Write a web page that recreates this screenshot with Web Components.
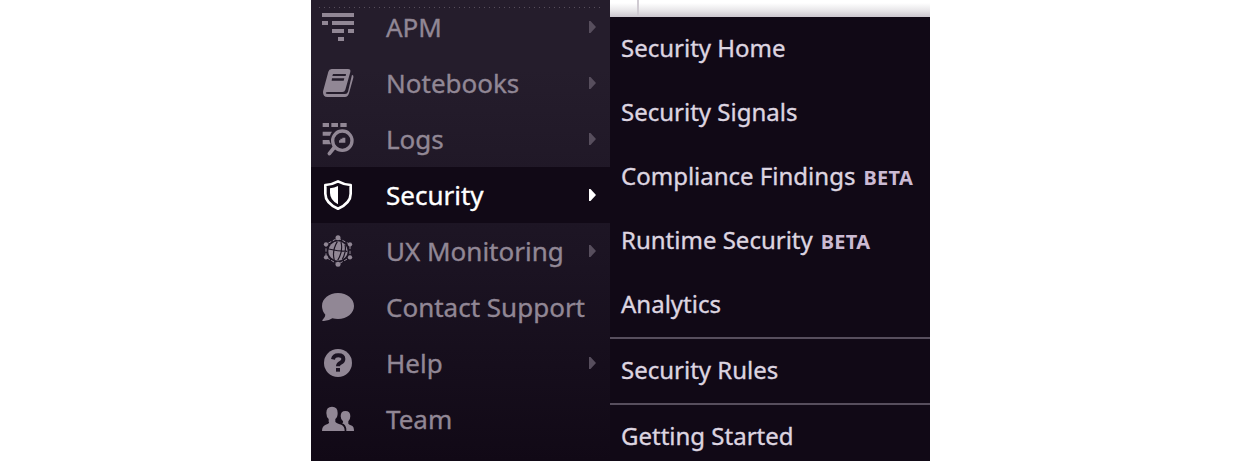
<!DOCTYPE html>
<html lang="en">
<head>
<meta charset="utf-8">
<title>Security navigation</title>
<style>
html,body{margin:0;height:461px;overflow:hidden;background:#fff;font-family:"Noto Sans",sans-serif}
</style>
</head>
<body>
<app-shell>
  <side-nav slot="nav">
    <nav-row icon="apm" arrow>APM</nav-row>
    <nav-row icon="notebook" arrow>Notebooks</nav-row>
    <nav-row icon="logs" arrow>Logs</nav-row>
    <nav-row icon="shield" arrow active>Security</nav-row>
    <nav-row icon="globe" arrow>UX Monitoring</nav-row>
    <nav-row icon="chat">Contact Support</nav-row>
    <nav-row icon="help" arrow>Help</nav-row>
    <nav-row icon="team">Team</nav-row>
  </side-nav>
  <sub-menu slot="menu">
    <menu-link>Security Home</menu-link>
    <menu-link>Security Signals</menu-link>
    <menu-link badge="BETA">Compliance Findings</menu-link>
    <menu-link badge="BETA">Runtime Security</menu-link>
    <menu-link>Analytics</menu-link>
    <menu-link divided>Security Rules</menu-link>
    <menu-link divided>Getting Started</menu-link>
  </sub-menu>
</app-shell>
<script>
const ICONS = {
  apm: '<path d="M33 39h96v12H33zM33 63h18v12H33zM63 63h66v12H63zM63 87h36v12H63zM111 87h18v12h-18zM81 111h18v12H81z"/>',
  notebook: '<path fill-rule="evenodd" d="M62 39h49q9 0 7 9l-15 53q-2 7-9 7H51q-7 0-7 3t7 3h51q7 0 9-7l12-51q6 2 4 9l-13 47q-3 11-12 11H49q-13 0-13-14 0-5 2-10l14-52q2-8 10-8zM66 54l-2 6h40l1-6zM63 67l-1 7h36l2-7z"/>',
  logs: '<path d="M35 33h19v12H35zM61 33h20v12H61zM88 33h19v12H88zM35 59h28q-4 5-6 12H35zM35 84h20q1 7 5 13H35z"/><circle cx="94" cy="86" r="29" fill="none" stroke="currentColor" stroke-width="10"/><path d="M71 105L55 125" stroke="currentColor" stroke-width="11" stroke-linecap="round"/><path d="M84 92V85h4v-5h6v-3h9v15H84z"/>',
  shield: '<path d="M81 40q18 10 38 11v26q0 28-38 45Q43 105 43 77V51q20-1 38-11z" fill="none" stroke="currentColor" stroke-width="8" stroke-linejoin="round"/><path d="M81 54v55q-24-13-24-34V61q13-1 24-7z"/>',
  globe: '<path d="M81 42l36 19v39l-36 21-36-21V61z" fill="none" stroke="currentColor" stroke-width="3" stroke-dasharray="10 5"/><circle cx="81" cy="81" r="29"/><g fill="none" stroke="var(--cut)" stroke-width="3.5"><path d="M53 75q26 7 56 7M79 53q-17 28-9 56M90 54q7 27-10 55M102 62q5 20-8 44"/></g><circle cx="81" cy="41" r="7.5"/><circle cx="45" cy="61" r="6.5"/><circle cx="117" cy="61" r="6.5"/><circle cx="45" cy="100" r="6.5"/><circle cx="117" cy="100" r="6.5"/><circle cx="81" cy="121" r="7.5"/>',
  chat: '<path d="M81 39c27 0 48 17 48 39s-21 39-48 39q-9 0-17-2-12 9-29 8-3-2 0-4 8-7 8-15-10-11-10-26c0-22 21-39 48-39z"/>',
  help: '<circle cx="81" cy="81" r="42"/><path d="M66 70q2-12 16-12 15 0 15 11 0 7-8 11t-8 11" fill="none" stroke="var(--cut)" stroke-width="12"/><path d="M75 96h12v11H75z" fill="var(--cut)"/>',
  team: '<path d="M63 44q17 0 17 19 0 13-7 18v8q2 4 18 9 10 4 10 19H33q0-15 11-19 14-4 9-9v-8q-7-6-7-18 0-19 17-19zM103 57q15 0 15 16 0 9-6 15v7q2 3 11 6 6 3 6 16h-23q1-14-8-21l-5-2q5-1 3-6-7-6-7-15 0-16 14-16z"/>'
};
class AppShell extends HTMLElement {
  constructor() {
    super();
    this.attachShadow({mode:'open'}).innerHTML = `<style>
      :host{display:grid;grid-template-columns:299px 320px;justify-content:start;padding-left:311px;height:461px;overflow:hidden}
      .right{display:grid;grid-template-rows:17px 1fr}
      .page{display:flex;background:linear-gradient(#fff 0,#fff 3px,#e6e4e7 11px,#cbc6ce 17px)}
      .page i{width:2px;margin-left:27px;background:#d0cbd2}
    </style><slot name="nav"></slot><div class="right"><div class="page"><i></i></div><slot name="menu"></slot></div>`;
  }
}
class SideNav extends HTMLElement {
  constructor() {
    super();
    this.attachShadow({mode:'open'}).innerHTML = `<style>
      :host{display:block;height:461px;overflow:hidden;
        background:repeating-linear-gradient(90deg,#574e5d 0 1px,transparent 1px 5px) 8px 7px/285px 1px no-repeat,
        linear-gradient(#251d2c 0,#251d2c 70px,#1b1322 270px,#110916 461px)}
      div{display:flex;flex-direction:column;margin-top:-1px}
    </style><div><slot></slot></div>`;
  }
}
class NavRow extends HTMLElement {
  constructor() {
    super();
    const arrow = this.hasAttribute('arrow') ? '<svg class="arrow" width="8" height="14" viewBox="0 0 8 14"><path d="M0 1h1.5l5.5 6-5.5 6H0z"/></svg>' : '';
    this.attachShadow({mode:'open'}).innerHTML = `<style>
      :host{display:flex;height:56px;flex:none;color:#918795;--cut:#1b1322;--arrow:#574e5d;font-size:26px;line-height:56px}
      :host([active]){background:#110916;color:#fff;--arrow:#fff}
      svg{display:block;flex:none;fill:currentColor}
      span{white-space:nowrap;margin-left:15px;-webkit-text-stroke:.35px currentColor}
      .arrow{fill:var(--arrow);margin:21px 13px 0 auto}
    </style><svg width="60" height="56" viewBox="0 -3 180 168">${ICONS[this.getAttribute('icon')]}</svg><span><slot></slot></span>${arrow}`;
  }
}
class SubMenu extends HTMLElement {
  constructor() {
    super();
    this.attachShadow({mode:'open'}).innerHTML = `<style>
      :host{display:flex;flex-direction:column;background:#110916;overflow:hidden}
    </style><slot></slot>`;
  }
}
class MenuLink extends HTMLElement {
  constructor() {
    super();
    const b = this.getAttribute('badge');
    this.attachShadow({mode:'open'}).innerHTML = `<style>
      :host{display:flex;align-items:baseline;flex:none;height:64px;padding-left:11px;color:#ddd5e0;font-size:24px;line-height:62px;white-space:nowrap}
      :host([divided]){border-top:2px solid #574e5d}
      span{-webkit-text-stroke:.35px currentColor}
      b{font-size:20px;color:#cbbad3;margin-left:8px;letter-spacing:.3px}
    </style><span><slot></slot></span>${b ? `<b>${b}</b>` : ''}`;
  }
}
customElements.define('app-shell', AppShell);
customElements.define('side-nav', SideNav);
customElements.define('nav-row', NavRow);
customElements.define('sub-menu', SubMenu);
customElements.define('menu-link', MenuLink);
</script>
</body>
</html>
